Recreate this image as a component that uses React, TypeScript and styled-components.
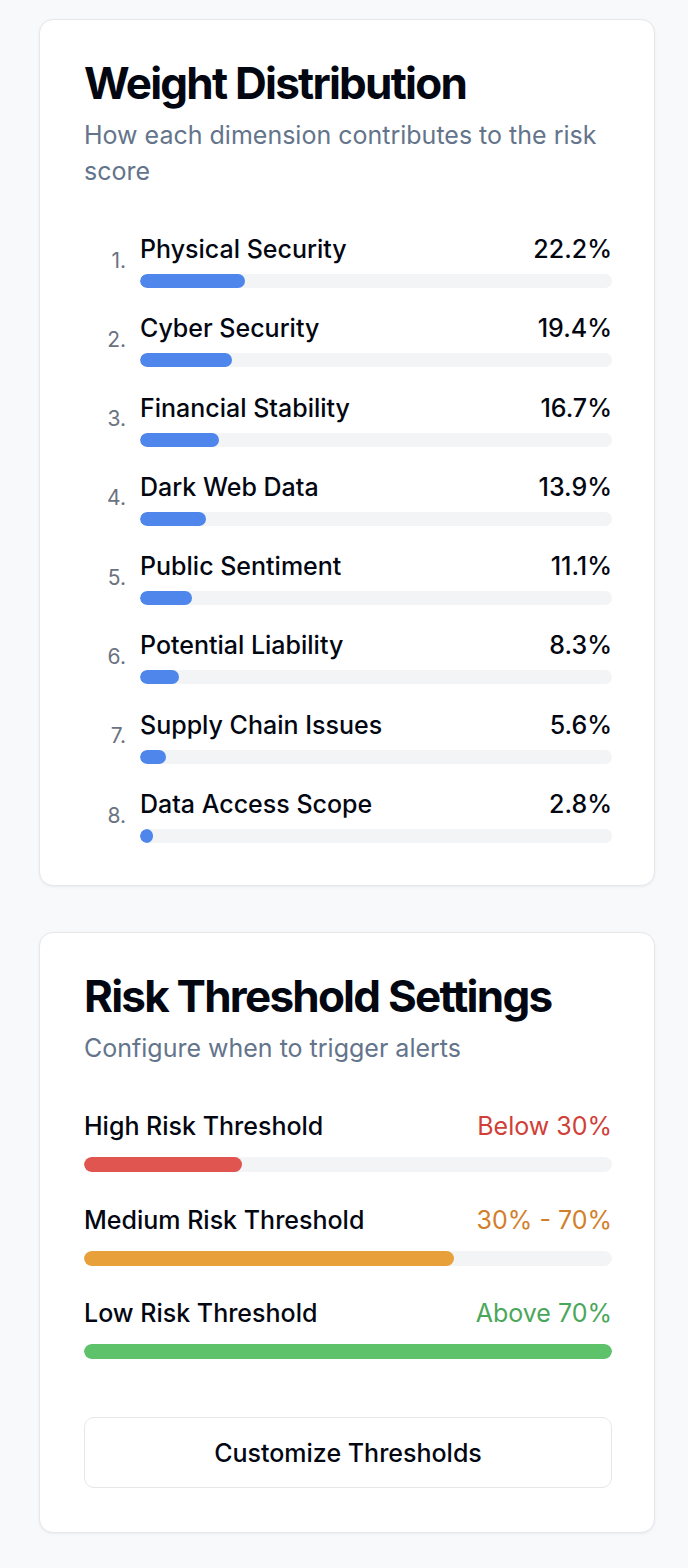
import React from 'react';
import styled, { createGlobalStyle } from 'styled-components';

const GlobalStyle = createGlobalStyle`
  html, body {
    margin: 0;
    padding: 0;
    background: #f8f9fb;
  }
  body {
    font-family: Inter, "Noto Sans", "Liberation Sans", sans-serif;
    color: #030712;
    -webkit-font-smoothing: antialiased;
  }
  * {
    box-sizing: border-box;
  }
`;

const weights = [
  { name: 'Physical Security', value: 22.2 },
  { name: 'Cyber Security', value: 19.4 },
  { name: 'Financial Stability', value: 16.7 },
  { name: 'Dark Web Data', value: 13.9 },
  { name: 'Public Sentiment', value: 11.1 },
  { name: 'Potential Liability', value: 8.3 },
  { name: 'Supply Chain Issues', value: 5.6 },
  { name: 'Data Access Scope', value: 2.8 },
];

const thresholds = [
  { name: 'High Risk Threshold', label: 'Below 30%', fill: 30, bar: '#e05550', text: '#d03f38' },
  { name: 'Medium Risk Threshold', label: '30% - 70%', fill: 70, bar: '#e8a03a', text: '#d27f2c' },
  { name: 'Low Risk Threshold', label: 'Above 70%', fill: 100, bar: '#5ec26a', text: '#4aa75a' },
];

const Page = styled.main`
  display: flex;
  flex-direction: column;
  gap: 46px;
  padding: 19px 33px 35px 39px;
`;

const Card = styled.section<{ $pb: number }>`
  width: 616px;
  background: #ffffff;
  border: 1px solid #e5e7eb;
  border-radius: 14px;
  box-shadow: 0 1px 3px rgba(15, 23, 42, 0.06);
  padding: 39px 42px ${(p) => p.$pb}px 44px;
`;

const Title = styled.h2`
  margin: 0;
  font-size: 44px;
  line-height: 48px;
  font-weight: 700;
  letter-spacing: -0.04em;
  color: #030712;
`;

const Subtitle = styled.p`
  margin: 10px 0 0;
  font-size: 25px;
  line-height: 36px;
  color: #64748b;
`;

const List = styled.ol<{ $gap: number; $top: number }>`
  list-style: none;
  margin: ${(p) => p.$top}px 0 0;
  padding: 0;
  display: flex;
  flex-direction: column;
  gap: ${(p) => p.$gap}px;
`;

const Row = styled.li`
  display: flex;
  align-items: center;
`;

const Num = styled.span`
  flex: none;
  width: 42px;
  margin-right: 14px;
  text-align: right;
  font-size: 21px;
  line-height: 28px;
  color: #6b7280;
`;

const Body = styled.div`
  flex: 1;
  min-width: 0;
`;

const Head = styled.div`
  display: flex;
  justify-content: space-between;
  align-items: baseline;
  font-size: 25px;
  line-height: 32px;
  font-weight: 500;
  color: #030712;
`;

const Value = styled.span<{ $color?: string }>`
  font-weight: ${(p) => (p.$color ? 400 : 500)};
  color: ${(p) => p.$color || '#030712'};
`;

const Track = styled.div<{ $top: number; $h: number }>`
  margin-top: ${(p) => p.$top}px;
  height: ${(p) => p.$h}px;
  background: #f3f4f6;
  border-radius: 999px;
  overflow: hidden;
`;

const Fill = styled.div<{ $color: string }>`
  height: 100%;
  background: ${(p) => p.$color};
  border-radius: 999px;
`;

const Button = styled.button`
  display: block;
  width: 100%;
  height: 71px;
  margin-top: 58px;
  background: #ffffff;
  border: 1px solid #e5e7eb;
  border-radius: 10px;
  font-family: inherit;
  font-size: 25px;
  font-weight: 500;
  color: #030712;
  cursor: pointer;
`;

export default function App() {
  return (
    <>
      <GlobalStyle />
      <Page>
        <Card $pb={42}>
          <Title>Weight Distribution</Title>
          <Subtitle>How each dimension contributes to the risk score</Subtitle>
          <List $gap={24.3} $top={44}>
            {weights.map((w, i) => (
              <Row key={w.name}>
                <Num>{i + 1}.</Num>
                <Body>
                  <Head>
                    <span>{w.name}</span>
                    <Value>{w.value}%</Value>
                  </Head>
                  <Track $top={9} $h={14}>
                    <Fill $color="#4f86ec" style={{ width: `${w.value}%` }} />
                  </Track>
                </Body>
              </Row>
            ))}
          </List>
        </Card>

        <Card $pb={44}>
          <Title>Risk Threshold Settings</Title>
          <Subtitle>Configure when to trigger alerts</Subtitle>
          <List $gap={31.5} $top={44}>
            {thresholds.map((t) => (
              <li key={t.name}>
                <Head>
                  <span>{t.name}</span>
                  <Value $color={t.text}>{t.label}</Value>
                </Head>
                <Track $top={15} $h={15}>
                  <Fill $color={t.bar} style={{ width: `${t.fill}%` }} />
                </Track>
              </li>
            ))}
          </List>
          <Button type="button">Customize Thresholds</Button>
        </Card>
      </Page>
    </>
  );
}
